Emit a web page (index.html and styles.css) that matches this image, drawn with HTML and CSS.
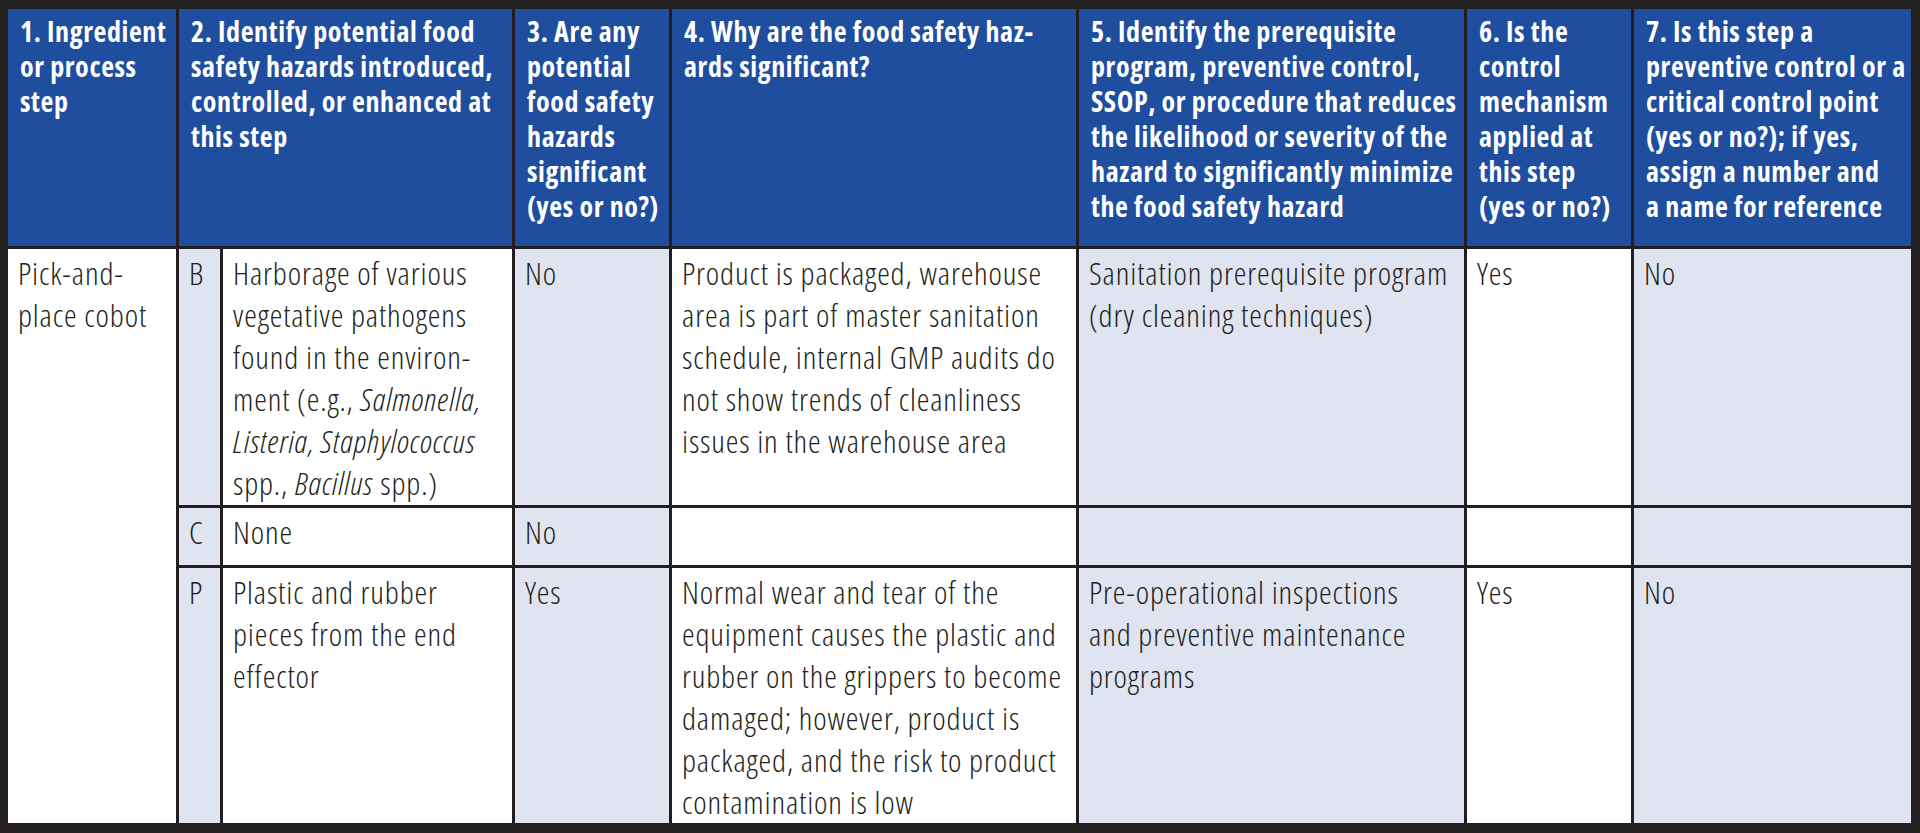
FILE: index.html
```html
<!DOCTYPE html>
<html lang="en">
<head>
<meta charset="utf-8">
<title>Hazard analysis – Pick-and-place cobot</title>
<link rel="stylesheet" href="styles.css">
</head>
<body>
<div class="frame">
  <table class="hazard">
    <colgroup>
      <col class="c-step">
      <col class="c-letter">
      <col class="c-hazard">
      <col class="c-sig">
      <col class="c-why">
      <col class="c-control">
      <col class="c-applied">
      <col class="c-ccp">
    </colgroup>
    <thead>
      <tr class="head-row">
        <th>1. Ingredient or process step</th>
        <th colspan="2">2. Identify potential food safety hazards introduced, controlled, or enhanced at this step</th>
        <th>3. Are any potential food safety hazards significant (yes or no?)</th>
        <th>4. Why are the food safety haz&shy;ards significant?</th>
        <th>5. Identify the prerequisite program, preventive control, SSOP, or procedure that reduces the likelihood or severity of the hazard to significantly minimize the food safety hazard</th>
        <th>6. Is the control mechanism applied at this step (yes or no?)</th>
        <th>7. Is this step a preventive control or a critical control point (yes or no?); if yes, assign a number and a&nbsp;name for reference</th>
      </tr>
    </thead>
    <tbody>
      <tr class="row-b">
        <td rowspan="3">Pick-and-place cobot</td>
        <td class="shade letter">B</td>
        <td>Harborage of various vegetative pathogens found in the environ&shy;ment (e.g., <em>Salmonella, Listeria, Staphylococcus</em> spp., <em>Bacillus</em> spp.)</td>
        <td class="shade">No</td>
        <td>Product is packaged, warehouse area is part of master sanitation schedule, internal GMP audits do not show trends of cleanliness issues in the warehouse area</td>
        <td class="shade">Sanitation prerequisite program (dry cleaning techniques)</td>
        <td>Yes</td>
        <td class="shade">No</td>
      </tr>
      <tr class="row-c">
        <td class="shade letter">C</td>
        <td>None</td>
        <td class="shade">No</td>
        <td></td>
        <td class="shade"></td>
        <td></td>
        <td class="shade"></td>
      </tr>
      <tr class="row-p">
        <td class="shade letter">P</td>
        <td>Plastic and rubber pieces from the end effector</td>
        <td class="shade">Yes</td>
        <td>Normal wear and tear of the equipment causes the plastic and rubber on the grippers to become damaged; however, product is packaged, and the risk to product contamination is low</td>
        <td class="shade">Pre-operational inspections and&nbsp;preventive maintenance programs</td>
        <td>Yes</td>
        <td class="shade">No</td>
      </tr>
    </tbody>
  </table>
</div>
</body>
</html>
```

FILE: styles.css
```css
html, body {
  margin: 0;
  padding: 0;
  background: #231f20;
}

.frame {
  width: 1920px;
  height: 833px;
  box-sizing: border-box;
  padding: 6px 6px 7px 5px;
  background: #231f20;
  overflow: hidden;
}

.hazard {
  width: 1909px;
  table-layout: fixed;
  border-collapse: separate;
  border-spacing: 3px;
  font-family: "Open Sans", "Noto Sans", sans-serif;
  font-stretch: 75%;
  color: #231f20;
}

.c-step { width: 168px; }
.c-letter { width: 41px; }
.c-hazard { width: 289px; }
.c-sig { width: 154px; }
.c-why { width: 404px; }
.c-control { width: 385px; }
.c-applied { width: 164px; }
.c-ccp { width: 277px; }

.hazard th,
.hazard td {
  vertical-align: top;
  text-align: left;
  box-sizing: border-box;
  hyphens: manual;
}

.hazard th {
  background: #1f4e9f;
  color: #ffffff;
  font-weight: 700;
  font-size: 28px;
  letter-spacing: 0.6px;
  line-height: 35px;
  padding: 5px 4px 0 12px;
}

.head-row { height: 237px; }

.hazard td {
  background: #ffffff;
  font-weight: 300;
  font-size: 32px;
  letter-spacing: 0.85px;
  line-height: 42px;
  padding: 3px 4px 0 10px;
}

.hazard td.shade { background: #e0e4f1; }

.hazard td.letter { padding-left: 10px; padding-right: 0; }

.hazard em { font-style: italic; }

.row-b { height: 256px; }
.row-c { height: 57px; }
.row-p { height: 255px; }
```
